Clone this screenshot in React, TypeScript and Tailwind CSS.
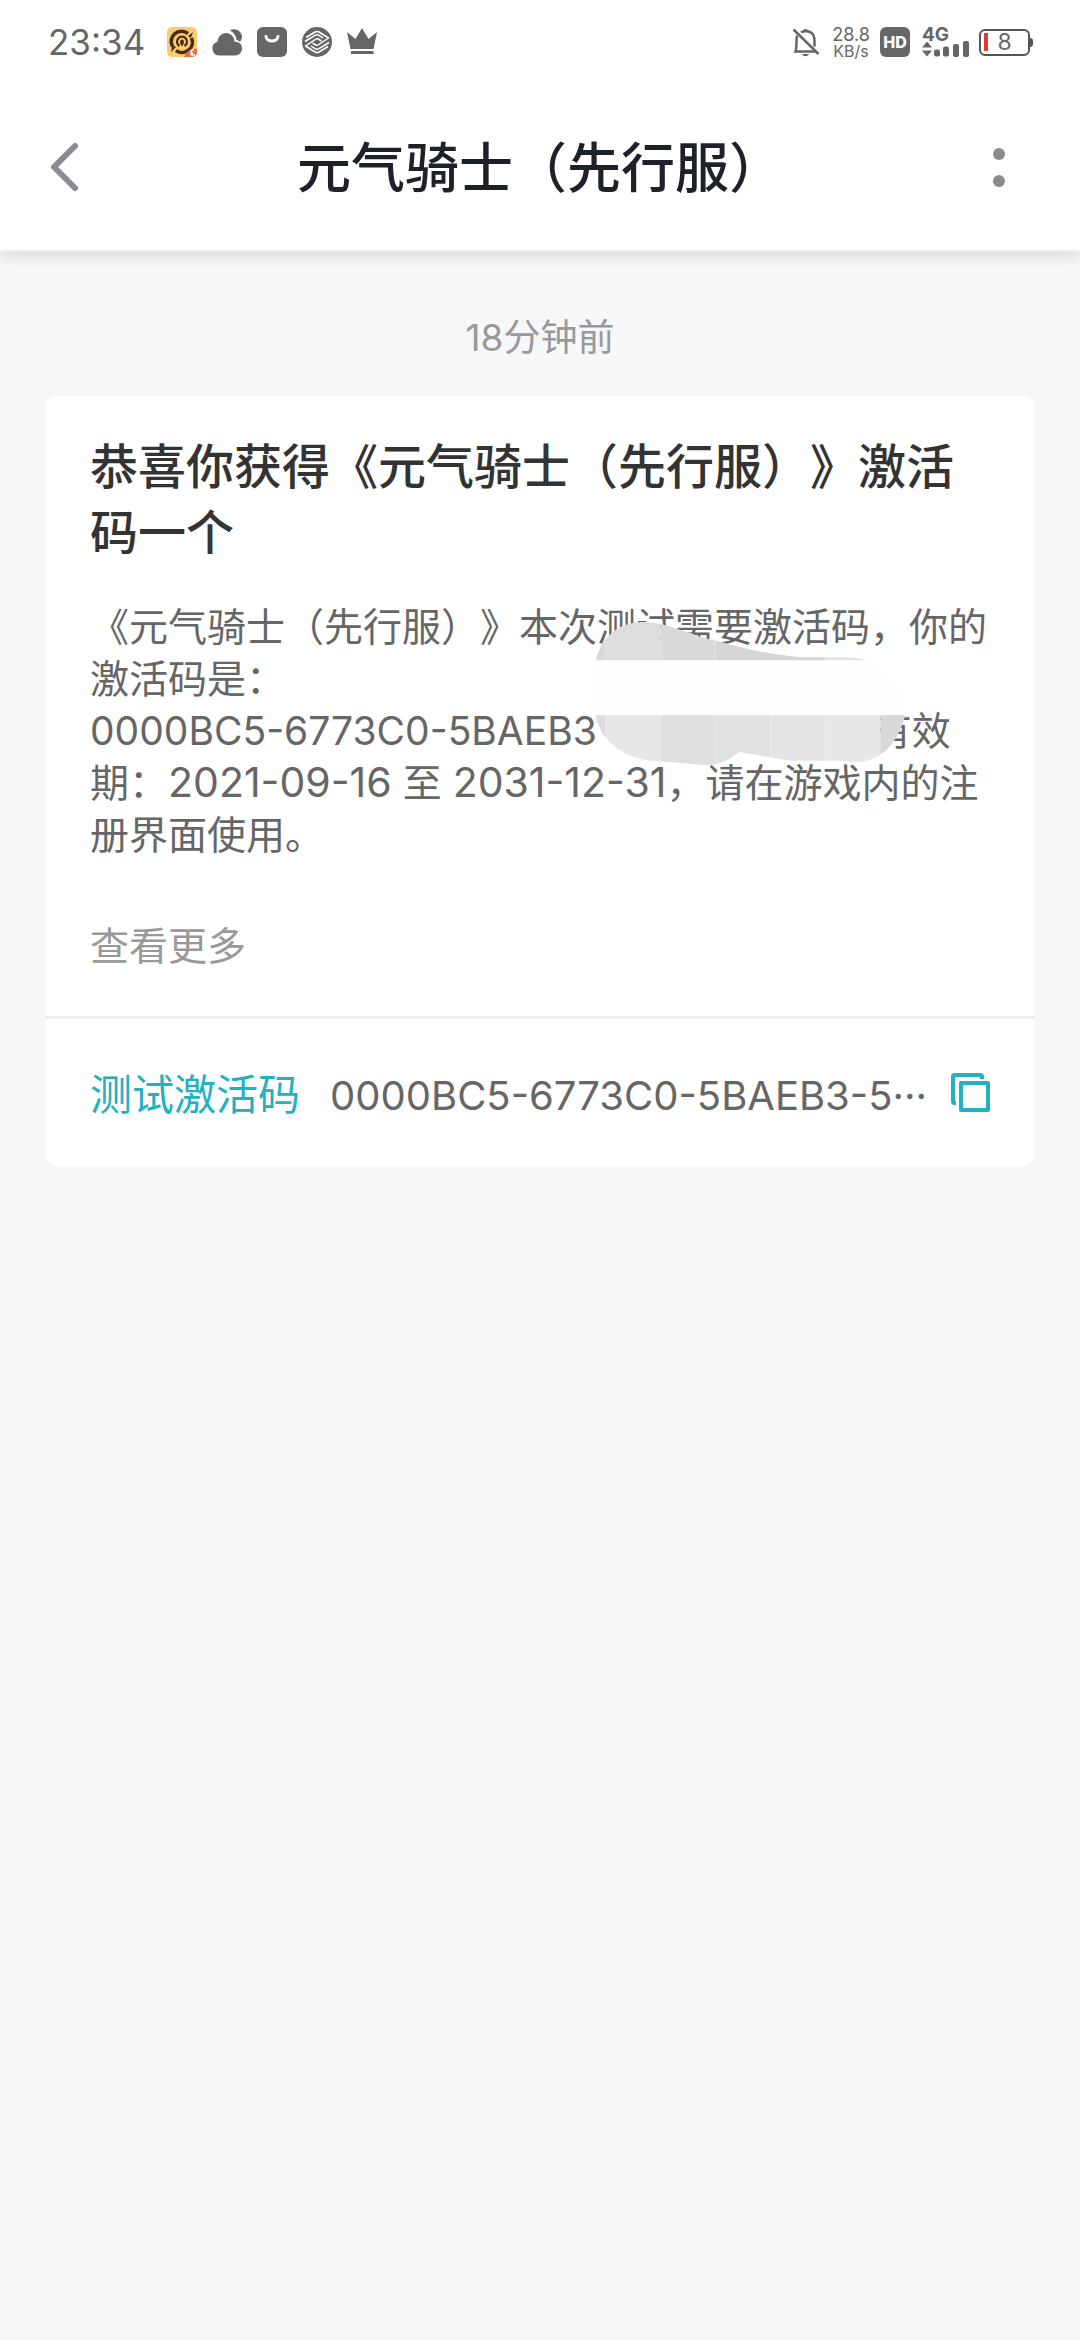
import type { ReactNode } from 'react';

const message = {
  time: '18分钟前',
  title: '恭喜你获得《元气骑士（先行服）》激活码一个',
  startDate: '2021-09-16',
  endDate: '2031-12-31',
  codeLabel: '测试激活码',
  codeShort: '0000BC5-6773C0-5BAEB3-5···',
};

function AppIcon({ children }: { children: ReactNode }) {
  return (
    <svg viewBox="0 0 30 30" className="size-[30px] shrink-0" fill="#666" aria-hidden="true">
      {children}
    </svg>
  );
}

function StatusBar() {
  return (
    <div className="flex h-[84px] items-center justify-between pr-[47px] pl-[48px] text-[#666]">
      <div className="flex items-center">
        <span className="w-[119px] text-[35px] leading-none">23:34</span>
        <div className="flex items-center gap-[15px]">
          {/* Music app */}
          <AppIcon>
            <rect width="30" height="30" rx="5" fill="#fbcb72" />
            <g fill="none" stroke="#4a2d0c">
              <path d="M5.500 19.500A10.300 10.300 0 0 1 21 6.500M24.500 11A10.300 10.300 0 0 1 9 23.500" strokeWidth="3.600" />
              <path d="M12.500 19A5 5 0 1 1 17.500 19" strokeWidth="2.200" />
            </g>
            <path d="M13.200 13.500q1.800-2 3.600 0v3l-1.800 3-1.800-3zM21 9l5-4-2 6zM9 20l-5 5 1.500-7z" fill="#4a2d0c" />
            <path d="M17 30a11 11 0 0 1 13-8v3a5 5 0 0 1-5 5z" fill="#e5694c" />
            <path d="M27 23c-4-1-4 3-1 3-3 0-3 2-1 2h3" fill="none" stroke="#fff" strokeWidth="1.400" />
          </AppIcon>
          {/* Weather */}
          <AppIcon>
            <path d="M18 3.500A8 8 0 0 1 30 9c0 3-1 4.800-2.300 6-.8-1.300-2-2-3.200-2.300C23.800 8.500 21.500 5 18 3.500z" />
            <path d="M7 28.500a7 7 0 0 1-1.500-13.700C6 9.800 9.500 6 14 6c4.800 0 8.200 3.600 8.600 8.700 1-.2 2.400 0 3.400.6 2.600 1 4 3.200 4 6.200 0 4-3 7-7 7z" />
          </AppIcon>
          {/* Shopping bag */}
          <AppIcon>
            <rect width="30" height="30" rx="6" />
            <path d="M9 9.500c1 6 11 6 12 0" fill="none" stroke="#fff" strokeWidth="3" strokeLinecap="round" />
          </AppIcon>
          {/* Mobile carrier */}
          <AppIcon>
            <circle cx="15" cy="15" r="15" />
            <g fill="none" stroke="#fff" strokeWidth="1.500" strokeLinejoin="round">
              <path d="M4 10.500 13 5Q15 4 17 5L26.500 11 16 18Q15 18.700 13.700 18L10.500 16" />
              <path d="M26 19.500 17 25Q15 26 13 25L3.500 19 14 12Q15 11.300 16.300 12L19.500 14" />
              <path d="M3 14.500 13 8.300Q15 7.300 17 8.300L21 11M27 15.500 17 21.700Q15 22.700 13 21.700L9 19" />
            </g>
          </AppIcon>
          {/* Crown */}
          <AppIcon>
            <path d="m0 5 8.500 7L15 1l6.500 11L30 5l-3.500 17h-23zM4 24h22.500v3H4z" />
          </AppIcon>
        </div>
      </div>

      <div className="flex items-center">
        <svg viewBox="0 0 28 30" className="h-[30px] w-[28px]" aria-hidden="true">
          <g fill="none" stroke="#666" strokeWidth="2.500">
            <path d="M1.500 2.500 26.500 27" />
            <path d="M9 5.500c2-1.500 9-2.500 12 2 2 3 1.500 7 1.500 12" />
            <path d="M5 8.500C4 14 5 21 3.500 24.500H24" />
          </g>
          <path d="M10 4.500c1-3.500 6-3.500 7 0zM10 27h7c-1.500 3-5.500 3-7 0z" fill="#666" />
        </svg>
        <div className="ml-3 flex w-[38px] flex-col items-center gap-[3px]">
          <span className="text-[18px] leading-[15px]">28.8</span>
          <span className="text-[16px] leading-[13px]">KB/s</span>
        </div>
        <div className="ml-[10px] flex size-[30px] items-center justify-center rounded-[6px] bg-[#666] text-[16px] font-extrabold text-white">
          HD
        </div>
        <div className="ml-3 h-[30px] w-[47px]">
          <div className="text-[19px] leading-[15px] font-bold">4G</div>
          <svg viewBox="0 0 47 15" className="-mt-px h-[16px] w-[47px]" fill="#666" aria-hidden="true">
            <path d="M0 6 5 0l5 6zM0 9h10l-5 6z" />
            <rect x="12" y="8" width="6" height="7" rx="2" />
            <rect x="21" y="5" width="6" height="10" rx="2" />
          </svg>
        </div>
        <svg viewBox="0 0 16 30" className="-ml-[16px] h-[30px] w-[16px]" fill="#666" aria-hidden="true">
          <rect x="0" y="17" width="6" height="13" rx="2" />
          <rect x="10" y="14" width="6" height="16" rx="2" />
        </svg>
        <div className="ml-[10px] flex h-[27px] w-[51px] items-center rounded-[6px] border-2 border-[#555] px-[3px]">
          <div className="h-[18px] w-[4px] bg-[#e03a30]" />
          <span className="flex-1 pr-1 text-center text-[23px] leading-none">8</span>
        </div>
        <div className="h-[9px] w-[3px] rounded-r-sm bg-[#555]" />
      </div>
    </div>
  );
}

function Header() {
  return (
    <header className="relative border-b-2 border-[#eeeeee] bg-white shadow-[0_4px_14px_rgba(0,0,0,0.12)]">
      <StatusBar />
      <div className="flex h-[166px] items-center justify-between px-[45px]">
        <button aria-label="返回" className="flex h-[90px] w-[72px] items-center">
          <svg viewBox="0 0 38 52" className="h-[52px] w-[38px]" fill="none" stroke="#888c92" strokeWidth="6" strokeLinecap="round" strokeLinejoin="round">
            <path d="M30 5 9 26l21 21" />
          </svg>
        </button>
        <h1 className="pt-1 text-[54px] leading-[80px] font-medium text-[#1d2129]">元气骑士（先行服）</h1>
        <button aria-label="更多" className="flex h-[90px] w-[72px] flex-col items-center justify-center gap-[15px]">
          <span className="size-3 rounded-full bg-[#888c92]" />
          <span className="size-3 rounded-full bg-[#888c92]" />
        </button>
      </div>
    </header>
  );
}

// Smudge that hides the rest of the activation code
function Smudge() {
  return (
    <svg viewBox="100 90 940 440" className="absolute top-[19px] left-[504px] h-[147px] w-[313px]" aria-hidden="true">
      <defs>
        <clipPath id="smudge">
          <path d="M105 210C120 150 165 95 250 95C330 98 400 140 470 152C560 176 610 190 720 201H860C960 204 1035 270 1035 375C1010 465 960 516 880 516L840 512H690L537 486C510 508 480 525 430 525L390 521L300 514C200 510 125 465 104 375C98 320 98 260 105 210Z" />
        </clipPath>
      </defs>
      <g clipPath="url(#smudge)">
        <rect x="90" y="200" width="960" height="180" fill="#fefefe" />
        <rect x="90" y="90" width="45" height="120" fill="#d9d9d9" />
        <rect x="135" y="90" width="165" height="120" fill="#dddddd" />
        <rect x="300" y="90" width="165" height="120" fill="#dadada" />
        <rect x="465" y="90" width="330" height="120" fill="#d6d6d6" />
        <rect x="795" y="90" width="165" height="120" fill="#e4e4e4" />
        <rect x="90" y="375" width="45" height="160" fill="#dcdcdc" />
        <rect x="135" y="375" width="165" height="160" fill="#e7e7e7" />
        <rect x="300" y="375" width="165" height="160" fill="#dfdfdf" />
        <rect x="465" y="375" width="165" height="160" fill="#e1e1e1" />
        <rect x="630" y="375" width="165" height="160" fill="#e4e4e4" />
        <rect x="795" y="375" width="165" height="160" fill="#e7e7e7" />
        <rect x="960" y="375" width="90" height="160" fill="#d8d8d8" />
      </g>
    </svg>
  );
}

function MessageCard() {
  return (
    <article className="rounded-xl bg-white">
      <div className="px-[45px] pt-[38px] pb-[44px]">
        <h2 className="text-[48px] leading-[66px] font-medium text-[#333]">{message.title}</h2>
        <div className="relative mt-[35px]">
          <p className="text-[39px] leading-[52px] text-[#666]">
            《元气骑士（先行服）》本次测试需要激活码，你的
            <br />
            激活码是：
            <br />
            0000BC5-6773C0-5BAEB3
            <span className="inline-block w-[276px]" />
            有效
            <br />
            期：<span className="text-[41px] leading-none">{message.startDate}</span> 至{' '}
            <span className="text-[41px] leading-none">{message.endDate}</span>，请在游戏内的注
            <br />
            册界面使用。
          </p>
          <Smudge />
        </div>
        <button className="mt-[59px] block text-[39px] leading-[52px] text-[#999]">查看更多</button>
      </div>
      <div className="flex h-[150px] items-center border-t-[3px] border-[#eeeeee] px-[45px]">
        <div className="flex flex-1 items-baseline gap-[30px] pt-1 whitespace-nowrap">
          <span className="text-[42px] text-[#22b1bf]">{message.codeLabel}</span>
          <span className="text-[40px] text-[#666]">{message.codeShort}</span>
        </div>
        <button aria-label="复制" className="shrink-0">
          <svg viewBox="0 0 39 39" className="size-[39px]" fill="none" stroke="#22b1bf" strokeWidth="4" strokeLinejoin="round">
            <path d="M31 6V3.500Q31 2 29.500 2H3.500Q2 2 2 3.500V28.500Q2 30 3.500 30H5" />
            <rect x="10" y="10" width="27" height="27" />
          </svg>
        </button>
      </div>
    </article>
  );
}

export default function App() {
  return (
    <div className="min-h-screen bg-[#f5f7f9] font-[Inter,'Noto_Sans_CJK_SC',sans-serif] [text-spacing-trim:space-all]">
      <Header />
      <main className="px-[45px] pb-[45px]">
        <p className="pt-[60px] pb-[32px] text-center text-[37px] leading-[52px] text-[#999]">{message.time}</p>
        <MessageCard />
      </main>
    </div>
  );
}
